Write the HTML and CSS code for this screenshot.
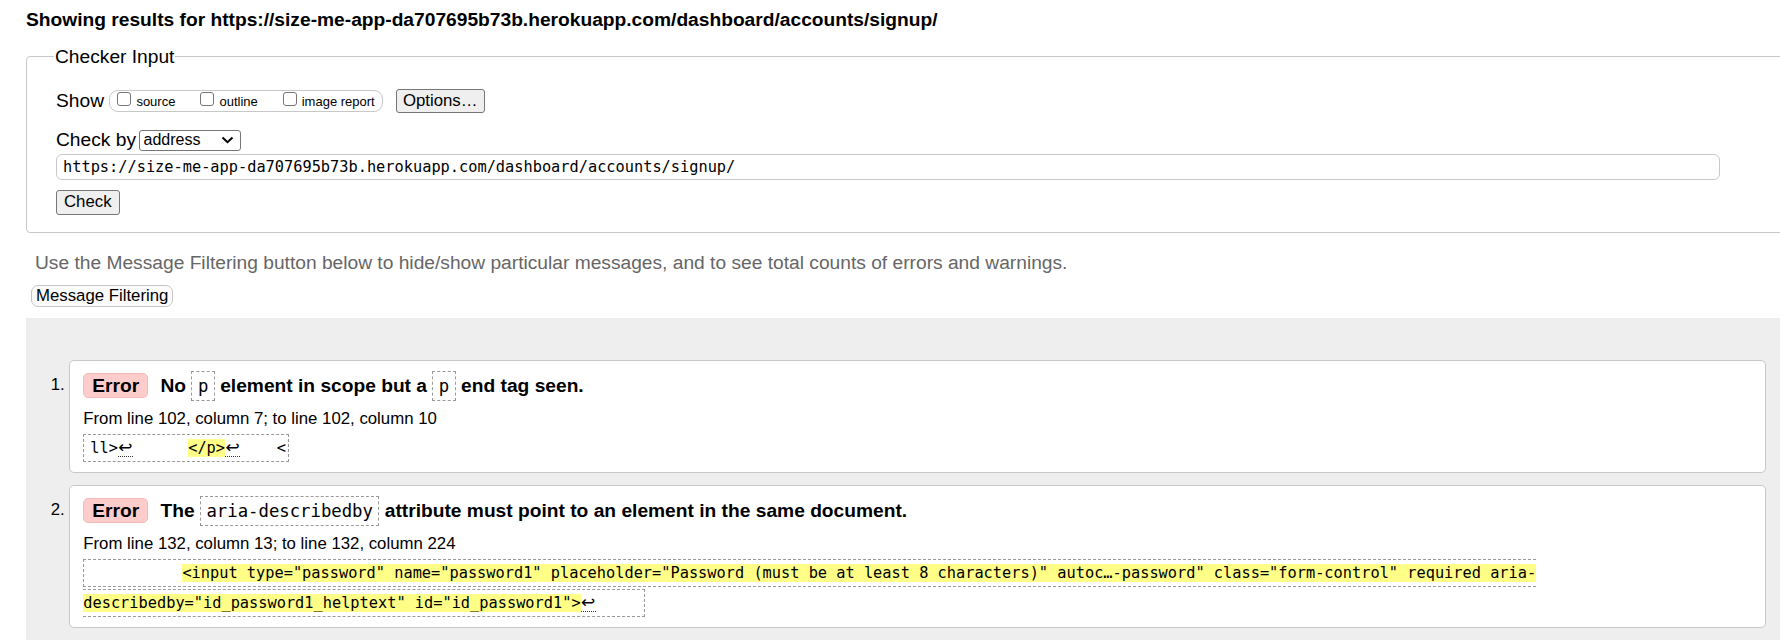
FILE: index.html
```html
<!DOCTYPE html>
<html lang="en">
<head>
<meta charset="utf-8">
<title>Showing results for https://size-me-app-da707695b73b.herokuapp.com/dashboard/accounts/signup/ - Nu Html Checker</title>
<link rel="stylesheet" href="styles.css">
</head>
<body>
<div class="page">
  <h2 class="title">Showing results for https://size-me-app-da707695b73b.herokuapp.com/dashboard/accounts/signup/</h2>

  <fieldset class="checker">
    <legend>Checker Input</legend>
    <div class="row show-row">
      <span class="lbl">Show</span>
      <span class="opts">
        <label class="opt"><span class="cb"></span>source</label>
        <label class="opt"><span class="cb"></span>outline</label>
        <label class="opt"><span class="cb"></span>image report</label>
      </span>
      <button class="btn options-btn" type="button">Options…</button>
    </div>
    <div class="row checkby-row">
      <span class="lbl lbl-tight">Check by</span>
      <span class="select">address<svg class="chev" width="13" height="8" viewBox="0 0 13 8"><polyline points="1.5,1.5 6.5,6.2 11.5,1.5" fill="none" stroke="#000" stroke-width="2"/></svg></span>
    </div>
    <div class="url">https://size-me-app-da707695b73b.herokuapp.com/dashboard/accounts/signup/</div>
    <button class="btn check-btn" type="button">Check</button>
  </fieldset>

  <p class="hint">Use the Message Filtering button below to hide/show particular messages, and to see total counts of errors and warnings.</p>
  <button class="filter-btn" type="button">Message Filtering</button>

  <div class="results">
    <div class="item">
      <span class="num">1.</span>
      <div class="msg">
        <p class="msg-head"><strong class="badge">Error</strong>No <code>p</code> element in scope but a <code>p</code> end tag seen.</p>
        <p class="location">From line 102, column 7; to line 102, column 10</p>
        <p class="extract"><code class="ext ext1">ll&gt;<span class="lf">↩</span>      <b>&lt;/p&gt;</b><span class="lf">↩</span>    &lt;</code></p>
      </div>
    </div>
    <div class="item">
      <span class="num">2.</span>
      <div class="msg">
        <p class="msg-head"><strong class="badge">Error</strong>The <code>aria-describedby</code> attribute must point to an element in the same document.</p>
        <p class="location">From line 132, column 13; to line 132, column 224</p>
        <p class="extract"><code class="ext">          <b>&lt;input type="password" name="password1" placeholder="Password (must be at least 8 characters)" autoc…-password" class="form-control" required aria-</b><br><b>describedby="id_password1_helptext" id="id_password1"&gt;</b><span class="lf">↩</span>     </code></p>
      </div>
    </div>
  </div>
</div>
</body>
</html>
```

FILE: styles.css
```css
html, body {
  margin: 0;
  padding: 0;
  overflow: hidden;
  background: #fff;
}

body {
  font-family: "Liberation Sans", Arial, sans-serif;
  color: #000;
}

.page {
  width: 1800px;
  padding: 8px 0 0 26px;
}

.title {
  margin: 0 0 14px;
  font-size: 19.2px;
  line-height: 23px;
  font-weight: bold;
}

/* ---------- checker input ---------- */
.checker {
  margin: 0;
  border: 1px solid #c8c8c8;
  border-radius: 4px;
  padding: 0 29px 17px;
}

.checker legend {
  font-size: 19.2px;
  line-height: 23px;
  padding: 0 1px;
  margin-left: -2px;
}

.row {
  display: flex;
  align-items: center;
}

.show-row {
  margin-top: 20px;
  height: 26px;
}

.lbl {
  font-size: 19.2px;
  margin-right: 5.4px;
}

.lbl-tight {
  margin-right: 3.5px;
}

.opts {
  display: inline-flex;
  align-items: center;
  height: 22px;
  box-sizing: border-box;
  border: 1px solid #c8c8c8;
  border-radius: 9px;
  padding: 0 7px 0 7px;
  font-size: 13px;
  gap: 25px;
}

.opt {
  display: inline-flex;
  align-items: center;
}

.cb {
  width: 14px;
  height: 14px;
  box-sizing: border-box;
  border: 1px solid #767676;
  border-radius: 3px;
  background: #fff;
  margin-right: 5px;
  margin-bottom: 5px;
}

.btn {
  font-family: "Liberation Sans", Arial, sans-serif;
  font-size: 16.8px;
  color: #000;
  background: #efefef;
  border: 1px solid #767676;
  border-radius: 3px;
  box-sizing: border-box;
  padding: 0 6px;
  margin: 0;
}

.options-btn {
  margin-left: 13px;
  height: 24px;
  width: 89px;
}

.checkby-row {
  margin-top: 14px;
  height: 24px;
}

.select {
  display: inline-flex;
  align-items: center;
  justify-content: space-between;
  box-sizing: border-box;
  width: 102px;
  height: 21px;
  border: 1px solid #767676;
  border-radius: 3px;
  padding: 0 6px 0 3px;
  font-size: 16px;
  background: #fff;
}

.chev {
  display: block;
}

.url {
  margin-top: 1.5px;
  width: 1664px;
  height: 26px;
  box-sizing: border-box;
  border: 1px solid #c8c8c8;
  border-radius: 6px;
  padding: 0 6px;
  font-family: "DejaVu Sans Mono", "Liberation Mono", monospace;
  font-size: 15.3px;
  line-height: 24px;
  white-space: nowrap;
}

.check-btn {
  display: block;
  margin-top: 10px;
  height: 25px;
  padding: 0 7px;
}

/* ---------- filtering ---------- */
.hint {
  margin: 18px 0 0 9px;
  font-size: 19.2px;
  line-height: 23px;
  color: #666;
}

.filter-btn {
  display: block;
  margin: 11px 0 0 5px;
  height: 22px;
  box-sizing: border-box;
  padding: 0 4px;
  font-family: "Liberation Sans", Arial, sans-serif;
  font-size: 16.8px;
  color: #000;
  background: #fbfbfb;
  border: 1px solid #c4c4c4;
  border-radius: 7px;
}

/* ---------- results ---------- */
.results {
  margin-top: 11px;
  background: #eee;
  padding: 42px 60px 40px 24.7px;
}

.item {
  display: flex;
  margin-bottom: 12px;
}

.num {
  flex: none;
  width: 18.3px;
  padding-top: 10px;
  font-size: 16.8px;
  line-height: 30px;
}

.msg {
  flex: 1;
  background: #fff;
  border: 1px solid #c8c8c8;
  border-radius: 5px;
  padding: 10px 14px 9px 13.3px;
}

.msg p {
  margin: 0;
}

.msg-head {
  font-size: 19.2px;
  line-height: 30px;
  font-weight: bold;
}

.badge {
  display: inline-block;
  line-height: 23px;
  padding: 0 8px;
  margin-right: 12.3px;
  border: 1px solid #f2baba;
  border-radius: 5px;
  background: #fcc;
}

.msg-head code {
  font-family: "DejaVu Sans Mono", "Liberation Mono", monospace;
  font-size: 17.3px;
  font-weight: normal;
  border: 1px dashed #999;
  padding: 4px 5.5px;
}

.location {
  margin-top: 8px !important;
  font-size: 16.8px;
  line-height: 20px;
}

.extract {
  margin-top: 4px !important;
  font-family: "DejaVu Sans Mono", "Liberation Mono", monospace;
  font-size: 15.3px;
  line-height: 30px;
}

.ext {
  font-family: inherit;
  font-size: inherit;
  white-space: pre;
  border: 1px dashed #999;
  padding: 4px 2px 4px 6px;
}

.ext b {
  font-weight: normal;
  background: #ff8;
}

.lf {
  display: inline-block;
  width: 15px;
  line-height: 17px;
  font-family: "DejaVu Sans", sans-serif;
  font-size: 17px;
  text-align: center;
  border-bottom: 1px dotted #333;
}
```
